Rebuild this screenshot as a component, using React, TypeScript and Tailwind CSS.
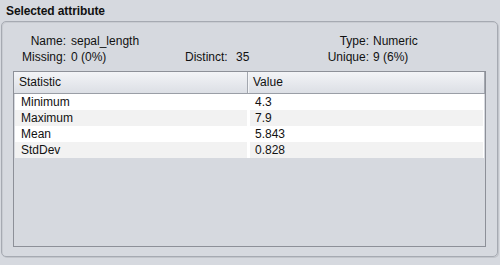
const rows = [
  ["Minimum", "4.3"],
  ["Maximum", "7.9"],
  ["Mean", "5.843"],
  ["StdDev", "0.828"],
];

export default function App() {
  return (
    <div
      className="w-[500px] h-[265px] bg-[#d6d9df] text-[#111] overflow-hidden"
      style={{ fontFamily: '"Liberation Sans", Arial, sans-serif' }}
    >
      <div className="h-[21px] pl-[6px] pt-[4px] text-[12px] font-bold leading-[14px] tracking-[-0.1px]">
        Selected attribute
      </div>
      <div className="ml-[1px] w-[497px] h-[236px] rounded-[5px] border border-[#a6aab2] shadow-[inset_1px_1px_0_#c9ccd2,1px_1px_0_#c2c5cb] pt-[11px]">
        <div className="grid grid-cols-[64px_119px_47px_89px_48px_1fr] text-[12px] leading-[16px]">
          <div className="text-right">Name:</div>
          <div className="pl-[5px]">sepal_length</div>
          <div />
          <div />
          <div className="text-right">Type:</div>
          <div className="pl-[4px]">Numeric</div>
          <div className="text-right">Missing:</div>
          <div className="pl-[5px]">0 (0%)</div>
          <div>Distinct:</div>
          <div className="pl-[4px]">35</div>
          <div className="text-right">Unique:</div>
          <div className="pl-[4px]">9 (6%)</div>
        </div>
        <div className="mt-[6px] ml-[11px] w-[473px] h-[176px] border border-[#8d9098] text-[12px]">
          <div className="h-[22px] flex border-b border-[#9a9ea6] bg-gradient-to-b from-[#f3f4f7] to-[#dcdfe5]">
            <div className="w-[234px] pl-[5px] leading-[21px] border-r border-[#a3a7af] shadow-[1px_0_0_#f4f5f7]">
              Statistic
            </div>
            <div className="flex-1 pl-[5px] leading-[21px] border-r border-[#a3a7af]">Value</div>
          </div>
          <div className="px-px">
            {rows.map(([k, v], i) => (
              <div
                key={k}
                className="grid grid-cols-[232px_1fr] gap-[3px] h-[16px] leading-[16px] bg-white"
              >
                <div className={`pl-[6px] ${i % 2 ? "bg-[#f2f2f2]" : "bg-white"}`}>{k}</div>
                <div className={`pl-[5px] mr-px ${i % 2 ? "bg-[#f2f2f2]" : "bg-white"}`}>{v}</div>
              </div>
            ))}
          </div>
        </div>
      </div>
    </div>
  );
}
